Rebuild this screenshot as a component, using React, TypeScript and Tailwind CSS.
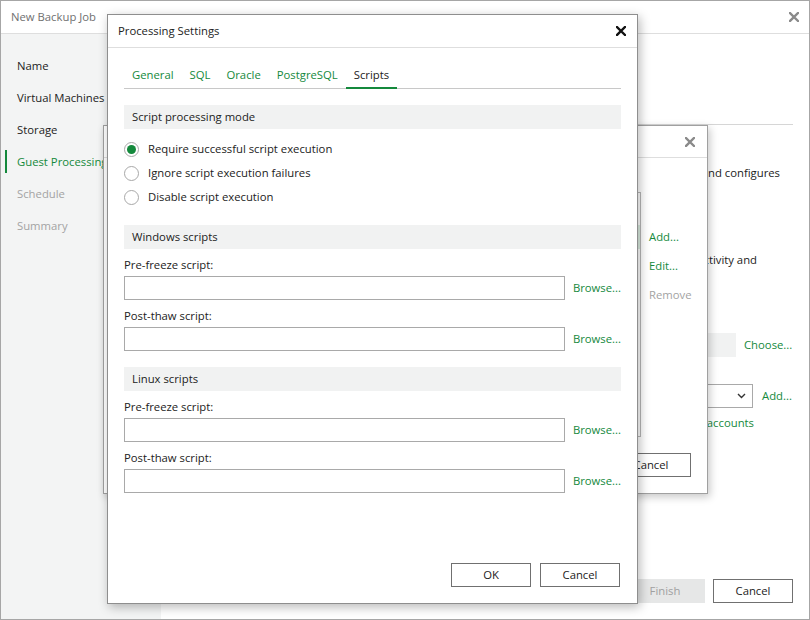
import React from 'react';

const green = 'text-[#14893c]';

function CloseIcon({ className = '' }: { className?: string }) {
  return (
    <svg width="10" height="10" viewBox="0 0 10 10" className={className}>
      <path d="M1 1 L9 9 M9 1 L1 9" stroke="currentColor" strokeWidth="2.4" strokeLinecap="square" />
    </svg>
  );
}

function Radio({ checked, label }: { checked?: boolean; label: string }) {
  return (
    <div className="flex items-center h-[24px]">
      <span className="w-[15px] h-[15px] rounded-full border border-[#a8a8a8] bg-white flex items-center justify-center">
        {checked && <span className="w-[9px] h-[9px] rounded-full bg-[#14893c]" />}
      </span>
      <span className="ml-[9px] text-[#222]">{label}</span>
    </div>
  );
}

function SectionHeader({ title, className = '' }: { title: string; className?: string }) {
  return (
    <div className={`h-[24px] bg-[#f1f2f2] flex items-center px-[8px] text-[#222] ${className}`}>
      {title}
    </div>
  );
}

function ScriptField({ label }: { label: string }) {
  return (
    <>
      <div className="mt-[8px] h-[16px] flex items-center text-[#222]">{label}</div>
      <div className="mt-[3px] flex items-center">
        <div className="w-[442px] h-[24px] border border-[#a9a9a9] bg-white" />
        <span className={`ml-[8px] ${green}`}>Browse...</span>
      </div>
    </>
  );
}

function Button({ children, className = '' }: { children: React.ReactNode; className?: string }) {
  return (
    <div className={`w-[80px] h-[24px] border border-[#707070] bg-white flex items-center justify-center text-[#222] ${className}`}>
      {children}
    </div>
  );
}

const steps = [
  { name: 'Name', state: 'done' },
  { name: 'Virtual Machines', state: 'done' },
  { name: 'Storage', state: 'done' },
  { name: 'Guest Processing', state: 'active' },
  { name: 'Schedule', state: 'todo' },
  { name: 'Summary', state: 'todo' },
];

const tabs = ['General', 'SQL', 'Oracle', 'PostgreSQL', 'Scripts'];

export default function App() {
  return (
    <div className="relative w-[810px] h-[620px] overflow-hidden bg-white border border-[#a6a6a6] font-['Open_Sans',sans-serif] text-[11.3px] leading-[16px]">
      {/* Wizard window behind */}
      <div className="flex flex-col h-full">
        <header className="h-[33px] border-b border-[#dedede] flex items-center justify-between pl-[10px] pr-[10px]">
          <span className="text-[#707070]">New Backup Job</span>
          <CloseIcon className="text-[#8a8a8a]" />
        </header>
        <div className="flex flex-1">
          <aside className="w-[160px] bg-[#f3f4f4] pt-[16px]">
            {steps.map((s) => (
              <div key={s.name} className="relative h-[32px] flex items-center pl-[16px] whitespace-nowrap">
                {s.state === 'active' && (
                  <span className="absolute left-[4px] top-[4px] w-[2px] h-[23px] bg-[#14893c]" />
                )}
                <span
                  className={
                    s.state === 'active' ? green : s.state === 'todo' ? 'text-[#a3a3a3]' : 'text-[#222]'
                  }
                >
                  {s.name}
                </span>
              </div>
            ))}
          </aside>
          <main className="flex-1 flex flex-col px-[16px]">
            <div className="h-[91px] border-b border-[#d6d6d6]" />
            <div className="mt-[40px] flex justify-end pr-[13px] text-[#222] whitespace-nowrap">
              and configures
            </div>
            <div className="mt-[71px] flex justify-end pr-[36px] text-[#222] whitespace-nowrap">
              ctivity and
            </div>
            <div className="mt-[65px] flex items-center">
              <div className="flex-1 h-[24px] bg-[#f1f2f2]" />
              <span className={`ml-[8px] w-[49px] ${green}`}>Choose...</span>
            </div>
            <div className="mt-[27px] flex items-center">
              <div className="flex-1 h-[24px] border border-[#a9a9a9] flex items-center justify-end pr-[6px]">
                <svg width="9" height="6" viewBox="0 0 9 6">
                  <path d="M1 1 L4.5 4.5 L8 1" stroke="#333" strokeWidth="1.4" fill="none" />
                </svg>
              </div>
              <span className={`ml-[9px] w-[31px] ${green}`}>Add...</span>
            </div>
            <div className={`mt-[7px] flex justify-end pr-[39px] ${green}`}>Manage accounts</div>
            <div className="flex-1" />
            <div className="flex justify-end gap-[8px] pb-[16px]">
              <div className="w-[80px] h-[24px] bg-[#e6e7e7] flex items-center justify-center text-[#a0a0a0]">
                Finish
              </div>
              <Button>Cancel</Button>
            </div>
          </main>
        </div>
      </div>

      {/* Middle dialog */}
      <div className="absolute left-[102px] top-[124px] w-[605px] bg-white border border-[#a0a0a0] shadow-[2px_3px_8px_rgba(0,0,0,0.22)] flex flex-col">
        <div className="h-[32px] border-b border-[#dedede] flex items-center justify-end pr-[12px]">
          <CloseIcon className="text-[#8a8a8a]" />
        </div>
        <div className="px-[16px] pb-[16px]">
          <div className="mt-[34px] flex">
            <div className="flex-1 h-[245px] border border-[#b8b8b8] pt-[32px]">
              <div className="h-[24px] bg-[#dcefe2]" />
            </div>
            <div className="ml-[8px] w-[42px] pt-[30px] flex flex-col whitespace-nowrap">
              <div className={`h-[29px] flex items-center ${green}`}>Add...</div>
              <div className={`h-[29px] flex items-center ${green}`}>Edit...</div>
              <div className="h-[29px] flex items-center text-[#a3a3a3]">Remove</div>
            </div>
          </div>
          <div className="mt-[16px] flex justify-end gap-[9px]">
            <Button>OK</Button>
            <Button>Cancel</Button>
          </div>
        </div>
      </div>

      {/* Processing Settings dialog */}
      <div className="absolute left-[106px] top-[13px] w-[531px] h-[590px] bg-white border border-[#8e8e8e] shadow-[2px_3px_10px_rgba(0,0,0,0.28)] flex flex-col">
        <div className="h-[33px] border-b border-[#dedede] flex items-center justify-between pl-[10px] pr-[11px] shrink-0">
          <span className="text-[#222]">Processing Settings</span>
          <CloseIcon className="text-[#111]" />
        </div>
        <div className="flex-1 flex flex-col px-[16px] pb-[16px]">
          <div className="mt-[14px] flex border-b border-[#c8c8c8]">
            {tabs.map((t) => (
              <div
                key={t}
                className={`h-[27px] -mb-px px-[8px] pt-[1px] flex items-center border-b-2 ${
                  t === 'Scripts' ? 'border-[#14893c] text-[#222]' : `border-transparent ${green}`
                }`}
              >
                {t}
              </div>
            ))}
          </div>

          <SectionHeader title="Script processing mode" className="mt-[16px]" />
          <div className="mt-[8px] flex flex-col">
            <Radio checked label="Require successful script execution" />
            <Radio label="Ignore script execution failures" />
            <Radio label="Disable script execution" />
          </div>

          <SectionHeader title="Windows scripts" className="mt-[16px]" />
          <ScriptField label="Pre-freeze script:" />
          <ScriptField label="Post-thaw script:" />

          <SectionHeader title="Linux scripts" className="mt-[16px]" />
          <ScriptField label="Pre-freeze script:" />
          <ScriptField label="Post-thaw script:" />

          <div className="flex-1" />
          <div className="flex justify-end gap-[9px] pr-[1px]">
            <Button>OK</Button>
            <Button>Cancel</Button>
          </div>
        </div>
      </div>
    </div>
  );
}
